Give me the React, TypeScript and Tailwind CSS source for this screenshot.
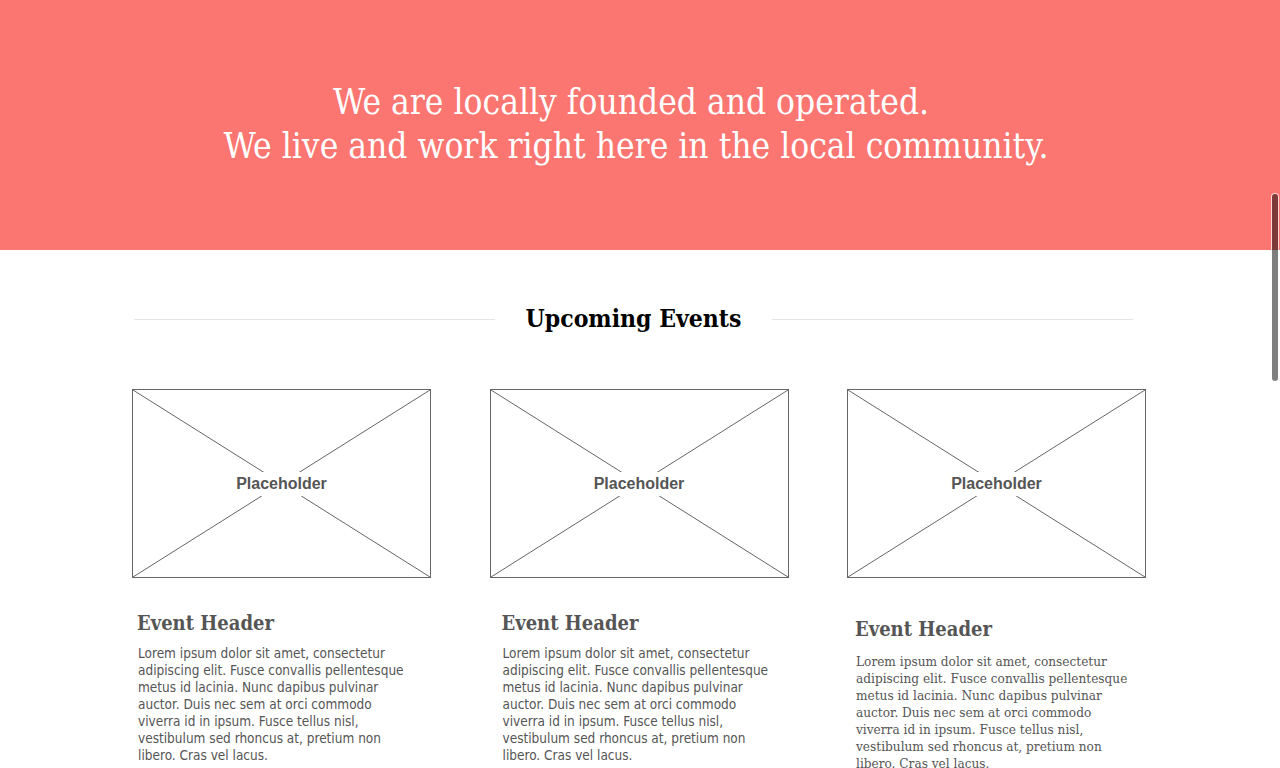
const events = [
  {
    sans: true,
    pad: 'pl-[5px] pt-[33px]',
    lines: [
      'Lorem ipsum dolor sit amet, consectetur',
      'adipiscing elit. Fusce convallis pellentesque',
      'metus id lacinia. Nunc dapibus pulvinar',
      'auctor. Duis nec sem at orci commodo',
      'viverra id in ipsum. Fusce tellus nisl,',
      'vestibulum sed rhoncus at, pretium non',
      'libero. Cras vel lacus.',
    ],
  },
  {
    sans: true,
    pad: 'pl-[12px] pt-[33px]',
    lines: [
      'Lorem ipsum dolor sit amet, consectetur',
      'adipiscing elit. Fusce convallis pellentesque',
      'metus id lacinia. Nunc dapibus pulvinar',
      'auctor. Duis nec sem at orci commodo',
      'viverra id in ipsum. Fusce tellus nisl,',
      'vestibulum sed rhoncus at, pretium non',
      'libero. Cras vel lacus.',
    ],
  },
  {
    sans: false,
    pad: 'pl-[8px] pt-[39px]',
    lines: [
      'Lorem ipsum dolor sit amet, consectetur',
      'adipiscing elit. Fusce convallis pellentesque',
      'metus id lacinia. Nunc dapibus pulvinar',
      'auctor. Duis nec sem at orci commodo',
      'viverra id in ipsum. Fusce tellus nisl,',
      'vestibulum sed rhoncus at, pretium non',
      'libero. Cras vel lacus.',
    ],
  },
]

// Wireframe image box with an X through it
function Placeholder() {
  return (
    <div className="relative w-[299px] h-[189px] border border-[#666] bg-white">
      <svg className="absolute inset-0 w-full h-full" viewBox="0 0 297 187" preserveAspectRatio="none">
        <line x1="0" y1="0" x2="297" y2="187" stroke="#666" strokeWidth="1" />
        <line x1="297" y1="0" x2="0" y2="187" stroke="#666" strokeWidth="1" />
      </svg>
      <div className="absolute inset-0 flex items-center justify-center">
        <span className="bg-white px-[7px] py-[4px] text-[16px] font-bold text-[#555] font-['Liberation_Sans',Arial,sans-serif] leading-none">
          Placeholder
        </span>
      </div>
    </div>
  )
}

export default function App() {
  return (
    <div className="relative h-[768px] overflow-hidden bg-white">
      {/* Hero */}
      <div className="h-[250px] bg-[#fb7571] flex flex-col items-center pt-[80px] pr-[8px] text-white font-['DejaVu_Serif',Georgia,serif] font-stretch-condensed text-[35px] leading-[44px]">
        <p className="pr-[10px]">We are locally founded and operated.</p>
        <p>We live and work right here in the local community.</p>
      </div>

      {/* Section title */}
      <div className="w-[999px] ml-[134px] mt-[54px] flex items-center gap-[31px]">
        <div className="flex-1 h-px bg-[#e5e5e5]" />
        <h2 className="text-[24.5px] font-bold text-black font-['DejaVu_Serif',Georgia,serif] font-stretch-condensed leading-[30px]">
          Upcoming Events
        </h2>
        <div className="flex-1 h-px bg-[#e5e5e5]" />
      </div>

      {/* Cards */}
      <div className="w-[1014px] ml-[132px] mt-[55px] flex justify-between">
        {events.map((ev, i) => (
          <div key={i} className="w-[299px]">
            <Placeholder />
            <div className={ev.pad}>
              <h3 className="text-[20px] font-bold text-[#555] font-['DejaVu_Serif',Georgia,serif] font-stretch-condensed leading-[24px]">
                Event Header
              </h3>
              <p
                className={
                  ev.sans
                    ? "mt-[10px] pl-[1px] text-[13.5px] leading-[17px] text-[#555] font-['DejaVu_Sans',Tahoma,sans-serif] font-stretch-condensed whitespace-nowrap"
                    : "mt-[12px] pl-[1px] text-[13.5px] leading-[17px] text-[#555] font-['DejaVu_Serif',Georgia,serif] font-stretch-condensed whitespace-nowrap"
                }
              >
                {ev.lines.map((l, j) => (
                  <span key={j}>
                    {l}
                    <br />
                  </span>
                ))}
              </p>
            </div>
          </div>
        ))}
      </div>

      {/* overlay scrollbar thumb */}
      <div className="absolute right-[2px] top-[194px] w-[6px] h-[187px] rounded-full bg-black/50 ring-1 ring-white/70" />
    </div>
  )
}
